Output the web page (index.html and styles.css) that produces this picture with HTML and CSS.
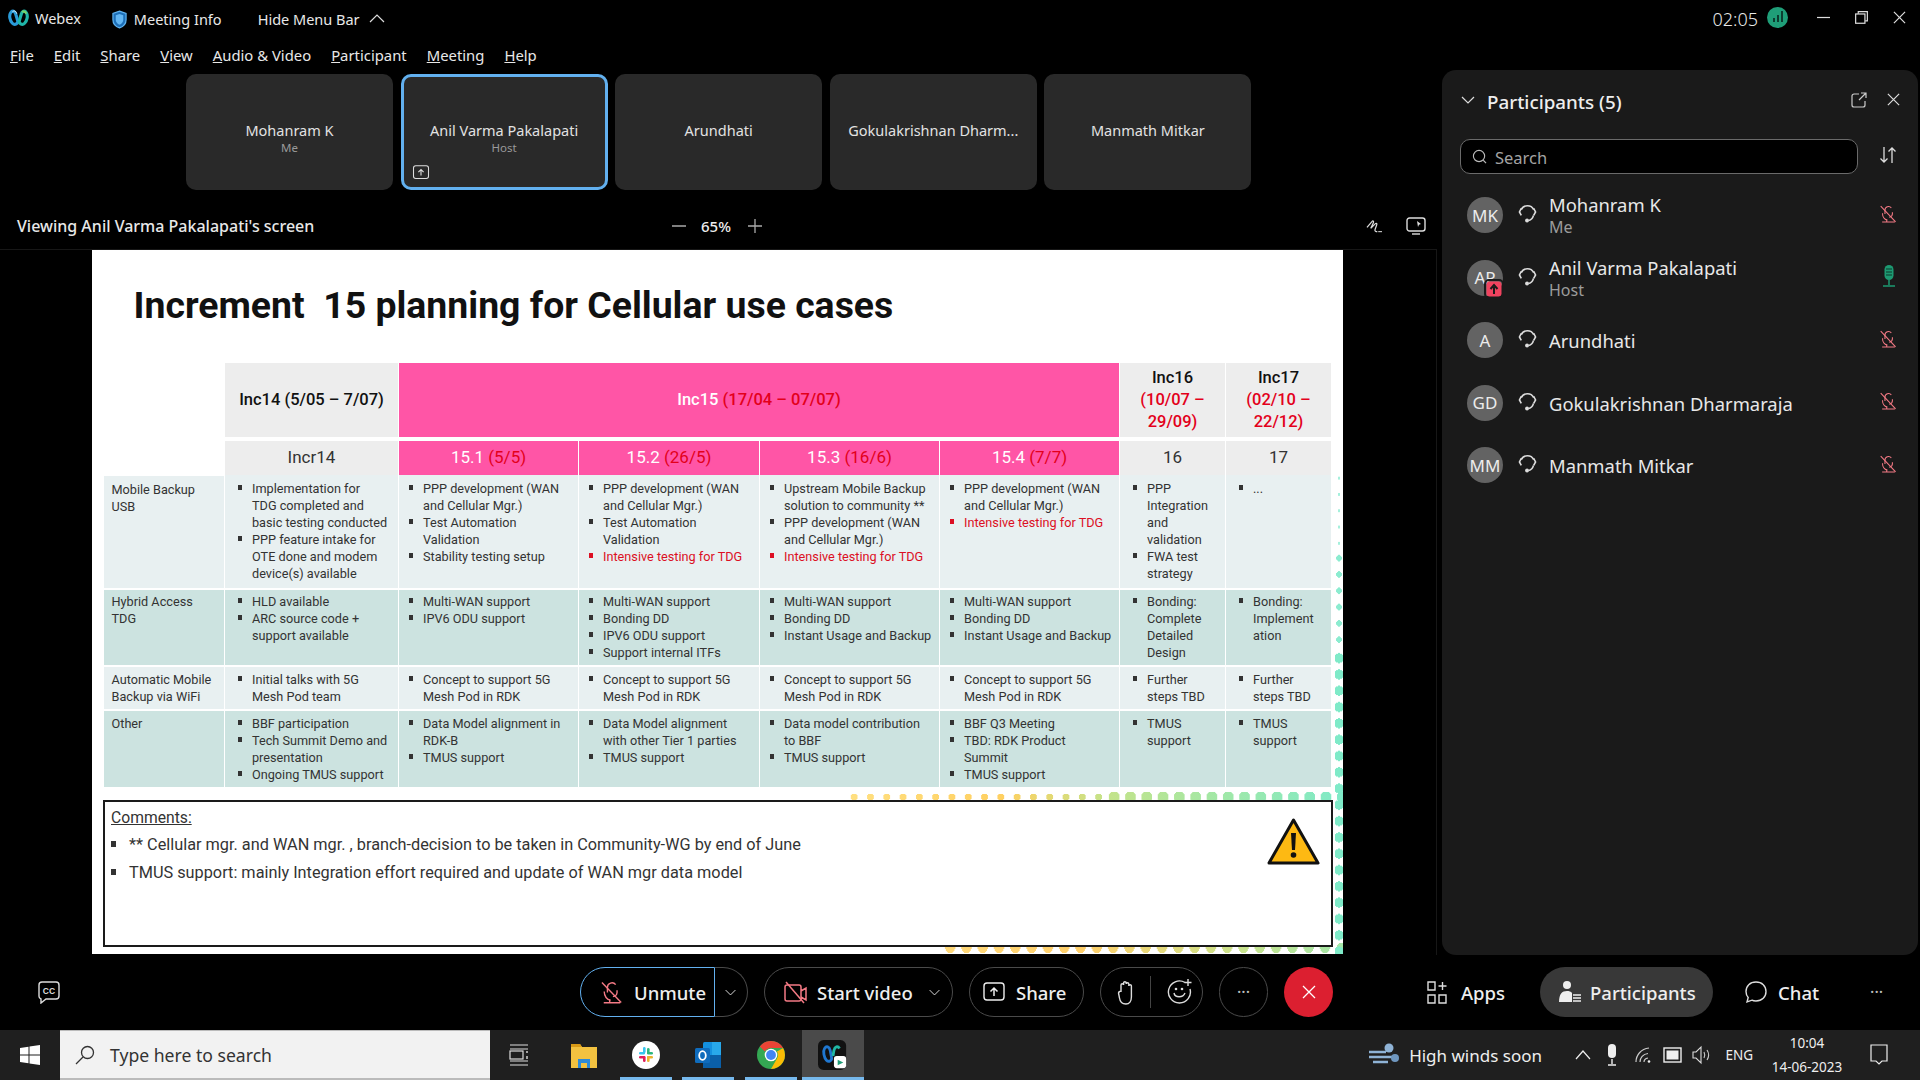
FILE: index.html
```html
<!DOCTYPE html>
<html lang="en">
<head>
<meta charset="utf-8">
<title>Webex</title>
<link rel="stylesheet" href="styles.css">
</head>
<body>
<svg class="sprite" aria-hidden="true">
  <symbol id="mute" viewBox="0 0 24 24"><g fill="none" stroke="currentColor" stroke-width="1.500"><path d="M7 12V6.500a5 5 0 0 1 9-3M17.500 9.500v2.500a5 5 0 0 1-4.500 4.500"/><path d="M3.500 11c0 5 3 9 7 9.500M9.500 20v3.200M3 23.200h18"/><path d="M1 1l21 22"/></g></symbol>
  <symbol id="head" viewBox="0 0 20 20"><g fill="none" stroke="currentColor" stroke-width="1.400"><path d="M4.600 7.500a6 6 0 0 1 10.800 0"/><path d="M4.600 6.500L3 9.500l1.600 3M15.400 6.500L17 9.500l-1.600 3"/><path d="M15.200 12.500c-.6 2.400-2.200 4-4.200 4.500"/></g><circle cx="9.600" cy="17" r="1.700" fill="currentColor"/></symbol>
  <symbol id="chev" viewBox="0 0 16 16"><path d="M2 5l6 6 6-6" fill="none" stroke="currentColor" stroke-width="1.200"/></symbol>
  <symbol id="x" viewBox="0 0 16 16"><path d="M2 2l12 12M14 2L2 14" fill="none" stroke="currentColor" stroke-width="1.300"/></symbol>
  <symbol id="share" viewBox="0 0 22 20"><rect x="1" y="1" width="20" height="17" rx="3" fill="none" stroke="currentColor" stroke-width="1.400"/><path d="M11 14V6M7.500 9.500L11 6l3.500 3.500" fill="none" stroke="currentColor" stroke-width="1.500"/></symbol>
</svg>

<div class="app">
  <header class="titlebar">
    <svg class="logo" viewBox="0 0 24 20"><path d="M3 4c2-3 5-2 6 2l2 7c1 3 -3 6 -6 3C2 13 1 7 3 4z" fill="none" stroke="#2a9bd8" stroke-width="3.600"/><path d="M21 4c-2-3-5-2-6 2l-2 7c-1 3 3 6 6 3 3-3 4-9 2-12z" fill="none" stroke="#1fb5a8" stroke-width="3.600"/><path d="M5 3c2-2 4-1 5 2" fill="none" stroke="#fff" stroke-width="1"/><path d="M16 3c2-1 4 0 5 2" fill="none" stroke="#7ad36a" stroke-width="2.400"/></svg>
    <span class="tb-webex">Webex</span>
    <svg class="shield" viewBox="0 0 16 20"><path d="M8 1l7 2.600v6.600c0 4.400-3 7.400-7 8.800-4-1.400-7-4.400-7-8.800V3.600z" fill="#1d6fb8" stroke="#5fb3f0" stroke-width="1.300"/><path d="M8 4l4 1.500v4.700c0 2.600-1.700 4.400-4 5.300-2.300-.9-4-2.700-4-5.300V5.500z" fill="#62b6f3"/></svg>
    <span class="tb-info">Meeting Info</span>
    <span class="tb-hide">Hide Menu Bar</span>
    <svg class="tb-caret" viewBox="0 0 16 16"><path d="M1 12l7-7 7 7" fill="none" stroke="#ddd" stroke-width="1.200"/></svg>
    <span class="tb-time">02:05</span>
    <svg class="signal" viewBox="0 0 21 21"><circle cx="10.500" cy="10.500" r="10.500" fill="#1f9e78"/><path d="M6 11h2v4H6zM10 8h2v7h-2z" fill="#0c3d30"/><path d="M14 4h2v11h-2z" fill="#0c3d30"/></svg>
    <svg class="win win-min" viewBox="0 0 14 14"><path d="M0 7h14" stroke="#ddd" stroke-width="1.300"/></svg>
    <svg class="win win-res" viewBox="0 0 14 14"><path d="M3.500 3V.7h9.800v10H11" fill="none" stroke="#ddd" stroke-width="1.300"/><rect x=".7" y="3.200" width="10" height="10" fill="none" stroke="#ddd" stroke-width="1.300"/></svg>
    <svg class="win win-close" viewBox="0 0 14 14"><path d="M1 1l12 12M13 1L1 13" stroke="#ddd" stroke-width="1.300"/></svg>
  </header>

  <div class="content">
    <main class="left">
      <nav class="menubar">
        <span class="m-file"><u>F</u>ile</span><span><u>E</u>dit</span><span><u>S</u>hare</span><span><u>V</u>iew</span><span><u>A</u>udio &amp; Video</span><span><u>P</u>articipant</span><span><u>M</u>eeting</span><span><u>H</u>elp</span>
      </nav>
      <section class="tiles">
        <div class="tile"><div class="t-name">Mohanram K</div><div class="t-sub">Me</div></div>
        <div class="tile tile-active"><div class="t-name">Anil Varma Pakalapati</div><div class="t-sub">Host</div>
          <svg class="t-share"><use href="#share"/></svg></div>
        <div class="tile"><div class="t-name">Arundhati</div></div>
        <div class="tile"><div class="t-name">Gokulakrishnan Dharm...</div></div>
        <div class="tile"><div class="t-name">Manmath Mitkar</div></div>
      </section>
      <div class="viewbar">
        <span class="v-title">Viewing Anil Varma Pakalapati's screen</span>
        <div class="zoomctl">
          <svg viewBox="0 0 14 14"><path d="M0 7h14" stroke="#aaa" stroke-width="1.500"/></svg>
          <span>65%</span>
          <svg viewBox="0 0 14 14"><path d="M0 7h14M7 0v14" stroke="#aaa" stroke-width="1.300"/></svg>
        </div>
        <div class="v-tools">
          <svg viewBox="0 0 18 16"><path d="M1 9l5.500-6.500c1-1 2 0 1.300 1.500L5 10l5-5c1-1 2 0 1.300 1.500l-1.800 5c-.3 1.500 1 2 2.500 2" fill="none" stroke="#ddd" stroke-width="1.300"/><path d="M13 13.500h4" stroke="#ddd" stroke-width="1.100"/></svg>
          <svg viewBox="0 0 20 18"><rect x="1" y="1" width="18" height="13" rx="2.500" fill="none" stroke="#ddd" stroke-width="1.400"/><path d="M6 17h8" stroke="#ddd" stroke-width="1.400"/><path d="M11 4l4 3-2 .8L12 10z" fill="#ddd"/></svg>
        </div>
      </div>
      <div class="stage">
        <article class="slide">
          <div class="dots dots-top"></div>
          <div class="dots dots-top2"></div>
          <div class="dots dots-bottom"></div>
          <div class="dots dots-r1"></div>
          <div class="dots dots-r2"></div>
          <div class="dots dots-r3"></div>
          <h1 class="s-title">Increment  15 planning for Cellular use cases</h1>
          <table class="plan">
            <colgroup><col class="c0"><col class="c1"><col class="c2"><col class="c3"><col class="c4"><col class="c5"><col class="c6"><col class="c7"></colgroup>
            <tr class="r-h1">
              <th class="blank"></th>
              <th class="gray">Inc14 (5/05 – 7/07)</th>
              <th class="pink" colspan="4">Inc15 <em>(17/04 – 07/07)</em></th>
              <th class="gray">Inc16<br><em>(10/07 –<br>29/09)</em></th>
              <th class="gray">Inc17<br><em>(02/10 –<br>22/12)</em></th>
            </tr>
            <tr class="r-h2">
              <th class="blank"></th>
              <td class="gray">Incr14</td>
              <td class="pink">15.1 <em>(5/5)</em></td>
              <td class="pink">15.2 <em>(26/5)</em></td>
              <td class="pink">15.3 <em>(16/6)</em></td>
              <td class="pink">15.4 <em>(7/7)</em></td>
              <td class="gray">16</td>
              <td class="gray">17</td>
            </tr>
            <tr class="light r1">
              <td>Mobile Backup<br>USB</td>
              <td class="wide"><ul><li>Implementation for<br>TDG completed and<br>basic testing conducted</li><li>PPP feature intake for<br>OTE done and modem<br>device(s) available</li></ul></td>
              <td><ul><li>PPP development (WAN<br>and Cellular Mgr.)</li><li>Test Automation<br>Validation</li><li>Stability testing setup</li></ul></td>
              <td><ul><li>PPP development (WAN<br>and Cellular Mgr.)</li><li>Test Automation<br>Validation</li><li class="red">Intensive testing for TDG</li></ul></td>
              <td><ul><li>Upstream Mobile Backup<br>solution to community **</li><li>PPP development (WAN<br>and Cellular Mgr.)</li><li class="red">Intensive testing for TDG</li></ul></td>
              <td><ul><li>PPP development (WAN<br>and Cellular Mgr.)</li><li class="red">Intensive testing for TDG</li></ul></td>
              <td class="wide"><ul><li>PPP<br>Integration<br>and<br>validation</li><li>FWA test<br>strategy</li></ul></td>
              <td class="wide"><ul><li>...</li></ul></td>
            </tr>
            <tr class="dark r2">
              <td>Hybrid Access<br>TDG</td>
              <td class="wide"><ul><li>HLD available</li><li>ARC source code +<br>support available</li></ul></td>
              <td><ul><li>Multi-WAN support</li><li>IPV6 ODU support</li></ul></td>
              <td><ul><li>Multi-WAN support</li><li>Bonding DD</li><li>IPV6 ODU support</li><li>Support internal ITFs</li></ul></td>
              <td><ul><li>Multi-WAN support</li><li>Bonding DD</li><li>Instant Usage and Backup</li></ul></td>
              <td><ul><li>Multi-WAN support</li><li>Bonding DD</li><li>Instant Usage and Backup</li></ul></td>
              <td class="wide"><ul><li>Bonding:<br>Complete<br>Detailed<br>Design</li></ul></td>
              <td class="wide"><ul><li>Bonding:<br>Implement<br>ation</li></ul></td>
            </tr>
            <tr class="light r3">
              <td>Automatic Mobile<br>Backup via WiFi</td>
              <td class="wide"><ul><li>Initial talks with 5G<br>Mesh Pod team</li></ul></td>
              <td><ul><li>Concept to support 5G<br>Mesh Pod in RDK</li></ul></td>
              <td><ul><li>Concept to support 5G<br>Mesh Pod in RDK</li></ul></td>
              <td><ul><li>Concept to support 5G<br>Mesh Pod in RDK</li></ul></td>
              <td><ul><li>Concept to support 5G<br>Mesh Pod in RDK</li></ul></td>
              <td class="wide"><ul><li>Further<br>steps TBD</li></ul></td>
              <td class="wide"><ul><li>Further<br>steps TBD</li></ul></td>
            </tr>
            <tr class="dark r4">
              <td>Other</td>
              <td class="wide"><ul><li>BBF participation</li><li>Tech Summit Demo and<br>presentation</li><li>Ongoing TMUS support</li></ul></td>
              <td><ul><li>Data Model alignment in<br>RDK-B</li><li>TMUS support</li></ul></td>
              <td><ul><li>Data Model alignment<br>with other Tier 1 parties</li><li>TMUS support</li></ul></td>
              <td><ul><li>Data model contribution<br>to BBF</li><li>TMUS support</li></ul></td>
              <td><ul><li>BBF Q3 Meeting</li><li>TBD: RDK Product<br>Summit</li><li>TMUS support</li></ul></td>
              <td class="wide"><ul><li>TMUS<br>support</li></ul></td>
              <td class="wide"><ul><li>TMUS<br>support</li></ul></td>
            </tr>
          </table>
          <section class="comments">
            <div>
              <div class="c-head">Comments:</div>
              <ul>
                <li>** Cellular mgr. and WAN mgr. , branch-decision to be taken in Community-WG by end of June</li>
                <li>TMUS support: mainly Integration effort required and update of WAN mgr data model</li>
              </ul>
            </div>
            <svg class="warn" viewBox="0 0 53 47"><path d="M26.500 2L51 45H2z" fill="#fdb913" stroke="#111" stroke-width="3" stroke-linejoin="round"/><path d="M24 15h5l-1 17h-3z" fill="#111"/><circle cx="26.500" cy="37" r="2.800" fill="#111"/></svg>
          </section>
        </article>
      </div>
    </main>

    <aside class="panel">
      <div class="p-head">
        <svg class="p-chev"><use href="#chev"/></svg>
        <h2>Participants (5)</h2>
        <svg class="p-pop" viewBox="0 0 16 16"><path d="M8 2H3a2 2 0 0 0-2 2v9a2 2 0 0 0 2 2h9a2 2 0 0 0 2-2V9" fill="none" stroke="#ccc" stroke-width="1.200"/><path d="M8 8l7-7M10 1h5v5" fill="none" stroke="#ccc" stroke-width="1.200"/></svg>
        <svg class="p-x"><use href="#x"/></svg>
      </div>
      <div class="p-search">
        <div class="searchbox">
          <svg viewBox="0 0 16 16"><circle cx="7.500" cy="7.500" r="6" fill="none" stroke="#bbb" stroke-width="1.200"/><path d="M12 12l3 3" stroke="#bbb" stroke-width="1.200"/></svg>
          <span>Search</span>
        </div>
        <svg class="p-sort" viewBox="0 0 18 20"><path d="M5 2v15M1.500 13.500L5 17l3.500-3.500M13 18V3M9.500 6.500L13 3l3.500 3.500" fill="none" stroke="#ddd" stroke-width="1.300"/></svg>
      </div>
      <ul class="plist">
        <li class="person"><span class="avatar">MK</span><svg class="hs"><use href="#head"/></svg><div class="p-names"><div class="p-name">Mohanram K</div><div class="p-role">Me</div></div><svg class="pmic"><use href="#mute"/></svg></li>
        <li class="person"><span class="avatar">AP<svg class="badge" viewBox="0 0 16 16"><rect x=".5" y=".5" width="15" height="15" rx="3" fill="#f0435f"/><path d="M8 13V6M4.500 8L8 4l3.500 4" fill="none" stroke="#1a1a1a" stroke-width="2"/></svg></span><svg class="hs"><use href="#head"/></svg><div class="p-names"><div class="p-name">Anil Varma Pakalapati</div><div class="p-role">Host</div></div>
          <svg class="mic-on" viewBox="0 0 24 24"><rect x="7.500" y="1" width="9" height="15" rx="4.500" fill="#1d9a72"/><path d="M9 5h6M9 8h6M9 11h6" stroke="#0d3a2c" stroke-width="1"/><path d="M12 16v5M6 22h12" stroke="#1d9a72" stroke-width="1.500"/></svg></li>
        <li class="person solo"><span class="avatar">A</span><svg class="hs"><use href="#head"/></svg><div class="p-names"><div class="p-name">Arundhati</div></div><svg class="pmic"><use href="#mute"/></svg></li>
        <li class="person solo"><span class="avatar">GD</span><svg class="hs"><use href="#head"/></svg><div class="p-names"><div class="p-name">Gokulakrishnan Dharmaraja</div></div><svg class="pmic"><use href="#mute"/></svg></li>
        <li class="person solo"><span class="avatar">MM</span><svg class="hs"><use href="#head"/></svg><div class="p-names"><div class="p-name">Manmath Mitkar</div></div><svg class="pmic"><use href="#mute"/></svg></li>
      </ul>
    </aside>
  </div>

  <footer class="toolbar">
    <svg class="cc" viewBox="0 0 24 24"><path d="M5 2h14a3 3 0 0 1 3 3v11a3 3 0 0 1-3 3H9l-5 4v-4a3 3 0 0 1-2-3V5a3 3 0 0 1 3-3z" fill="none" stroke="#ddd" stroke-width="1.400"/><text x="12" y="14" class="cc-t">CC</text></svg>
    <div class="tb-center">
      <div class="group g-unmute">
        <button class="btn-focus"><svg class="ico-mute"><use href="#mute"/></svg>Unmute</button>
        <button class="btn-chev"><svg class="chev"><use href="#chev"/></svg></button>
      </div>
      <button class="pill g-video"><svg class="ico-cam" viewBox="0 0 26 26"><path d="M5 6h12a2 2 0 0 1 2 2v12a2 2 0 0 1-2 2H5a2 2 0 0 1-2-2V8a2 2 0 0 1 2-2zM19 12l5-3v12l-5-3" fill="none" stroke="#f47a85" stroke-width="1.500"/><path d="M4 3l18 21" stroke="#f47a85" stroke-width="1.500"/></svg>Start video<svg class="chev"><use href="#chev"/></svg></button>
      <button class="pill g-share"><svg class="ico-share"><use href="#share"/></svg>Share</button>
      <div class="pill g-react">
        <svg class="ico-hand" viewBox="0 0 20 26"><path d="M5 13V6a1.300 1.300 0 0 1 2.600 0V4a1.300 1.300 0 0 1 2.600 0v1a1.300 1.300 0 0 1 2.600 0v2a1.300 1.300 0 0 1 2.600 0v11c0 4-2 7-5.500 7S4 23 3.500 19L2.500 14c0-2 2.500-2 2.500-1z" fill="none" stroke="#ddd" stroke-width="1.400"/></svg>
        <span class="sep"></span>
        <svg class="ico-emo" viewBox="0 0 26 26"><path d="M18 3.500A11 11 0 1 0 23 10" fill="none" stroke="#ddd" stroke-width="1.400"/><path d="M7 14c1 5 9 5 11 0" fill="none" stroke="#ddd" stroke-width="1.400"/><circle cx="9" cy="10" r="1.300" fill="#ddd"/><circle cx="15" cy="10" r="1.300" fill="#ddd"/><path d="M21 0v7M17.500 3.500h7" stroke="#ddd" stroke-width="1.400"/></svg>
      </div>
      <button class="pill g-more"><span class="dotsmenu">···</span></button>
      <button class="g-end"><svg class="ico-x"><use href="#x"/></svg></button>
    </div>
    <div class="tb-right">
      <button class="flat b-apps"><svg class="ico-apps" viewBox="0 0 22 24"><path d="M2 2h7v8H2zM2 15h7v8H2zM13 15h7v8h-7zM16.500 2v8M12.500 6h8" fill="none" stroke="#ddd" stroke-width="1.400"/></svg>Apps</button>
      <button class="flat b-part"><svg class="ico-part" viewBox="0 0 24 24"><circle cx="9" cy="5" r="4" fill="#eee"/><path d="M1 22c0-8 3-11 8-11 2 0 4 .5 5 2v9z" fill="#eee"/><path d="M15 15h8M15 18h8M15 21h8" stroke="#eee" stroke-width="1.500"/></svg>Participants</button>
      <button class="flat b-chat"><svg class="ico-chat" viewBox="0 0 24 24"><path d="M12 2c6 0 10 4 10 9.500S18 21 12 21c-1.500 0-3-.2-4-.8L3 22l1.200-4.500C2.800 16 2 14 2 11.500 2 6 6 2 12 2z" fill="none" stroke="#ddd" stroke-width="1.400"/></svg>Chat</button>
      <span class="dotsmenu r-more">···</span>
    </div>
  </footer>

  <div class="taskbar">
    <svg class="tk-win" viewBox="0 0 20 20"><path d="M0 3l8.500-1.200v7.700H0zM9.500 1.600L20 0v9.500H9.500zM0 10.500h8.500v7.700L0 17zM9.500 10.500H20V20L9.500 18.400z" fill="#fff"/></svg>
    <div class="tk-search">
      <svg viewBox="0 0 20 20"><circle cx="12.500" cy="7.500" r="6" fill="none" stroke="#333" stroke-width="1.300"/><path d="M8 12l-7 7" stroke="#333" stroke-width="1.300"/></svg>
      <span>Type here to search</span>
    </div>
    <div class="tk-apps">
      <div class="tk-app"><svg class="ic20" viewBox="0 0 20 24"><path d="M1 2h18M1 6h18M1 18h18M1 22h18" stroke="#ddd" stroke-width="1.200"/><rect x="1" y="8" width="13" height="8" fill="none" stroke="#ddd" stroke-width="1.200"/><path d="M18 8v2M18 13v3" stroke="#ddd" stroke-width="1.400"/></svg></div>
      <div class="tk-app"><svg class="ic28" viewBox="0 0 28 28"><path d="M1 3h9l2 3h15v21H1z" fill="#f3c240"/><path d="M1 3h9l2 3H1z" fill="#d99a16"/><path d="M8 27v-9h12v9h-3v-5h-6v5z" fill="#2e8ad6"/></svg></div>
      <div class="tk-app run"><svg class="ic28" viewBox="0 0 28 28"><circle cx="14" cy="14" r="14" fill="#fff"/><rect x="7" y="11" width="6" height="2.600" rx="1.300" fill="#36c5f0"/><rect x="11" y="6" width="2.600" height="6" rx="1.300" fill="#36c5f0"/><rect x="15" y="7" width="2.600" height="6" rx="1.300" fill="#2eb67d"/><rect x="15" y="11" width="6" height="2.600" rx="1.300" fill="#2eb67d"/><rect x="15" y="15" width="6" height="2.600" rx="1.300" fill="#ecb22e"/><rect x="15" y="15" width="2.600" height="6" rx="1.300" fill="#ecb22e"/><rect x="7" y="15" width="6" height="2.600" rx="1.300" fill="#e01e5a"/><rect x="11" y="15" width="2.600" height="6" rx="1.300" fill="#e01e5a"/></svg></div>
      <div class="tk-app run"><svg class="ic28" viewBox="0 0 28 28"><rect x="9" y="1" width="18" height="26" rx="1.500" fill="#1490df"/><path d="M9 14h18v13H9z" fill="#0a5fa8"/><path d="M18 1h9v13h-9z" fill="#28a8ea"/><rect x="1" y="7" width="15" height="15" rx="1.500" fill="#0f6cbd"/><ellipse cx="8.500" cy="14.500" rx="3.300" ry="4.300" fill="none" stroke="#fff" stroke-width="1.800"/></svg></div>
      <div class="tk-app run"><svg class="ic28" viewBox="0 0 28 28"><circle cx="14" cy="14" r="14" fill="#34a853"/><path d="M14 0a14 14 0 0 1 12.100 7H14a7 7 0 0 0-6.100 3.500L2.800 5.600A14 14 0 0 1 14 0z" fill="#ea4335"/><path d="M26.100 7A14 14 0 0 1 14 28l6-10.500A7 7 0 0 0 20 10.500z" fill="#fbbc05"/><circle cx="14" cy="14" r="6.300" fill="#fff"/><circle cx="14" cy="14" r="4.900" fill="#4285f4"/></svg></div>
      <div class="tk-app active"><svg class="ic32" viewBox="0 0 32 32"><rect width="30" height="32" rx="6" fill="#111"/><path d="M7 9c2-3 5-2 6 2l1.500 8c.5 3-3 5-5.500 2.500S5 12 7 9z" fill="none" stroke="#1f77d0" stroke-width="3"/><path d="M23 9c-2-3-5-2-6 2l-1 6" fill="none" stroke="#20b8a5" stroke-width="3"/><rect x="17" y="17" width="13" height="13" rx="3" fill="#fff"/><path d="M21 21l6 3-6 3z" fill="#1f9e78"/></svg></div>
    </div>
    <div class="tk-tray">
      <svg class="t-wind" viewBox="0 0 30 24"><path d="M0 9h17M0 14h24M4 19h15" stroke="#8fb3d6" stroke-width="2.400"/><circle cx="20" cy="5" r="4.500" fill="#8fb3d6"/><circle cx="26" cy="15" r="4" fill="#6f97bf"/></svg>
      <span class="t-wtext">High winds soon</span>
      <svg class="t-caret" viewBox="0 0 16 10"><path d="M1 9l7-8 7 8" fill="none" stroke="#eee" stroke-width="1.200"/></svg>
      <svg class="t-mic" viewBox="0 0 12 22"><rect x="2" y="0" width="8" height="14" rx="4" fill="#eee"/><path d="M6 15v5M2 21h8" stroke="#eee" stroke-width="1.400"/></svg>
      <svg class="t-wifi" viewBox="0 0 18 18"><path d="M1 16C1 9 6 3 14 2M5 16c0-4 3-8 8-8.500M9 16c0-2 1-3.500 4-4" fill="none" stroke="#ccc" stroke-width="1.200"/><circle cx="14" cy="15.500" r="1.300" fill="#eee"/></svg>
      <svg class="t-batt" viewBox="0 0 20 16"><rect x="1" y="1" width="17" height="14" fill="none" stroke="#eee" stroke-width="1.400"/><rect x="3.500" y="3.500" width="12" height="9" fill="#eee"/></svg>
      <svg class="t-vol" viewBox="0 0 20 20"><path d="M1 7h3l5-5v16l-5-5H1z" fill="none" stroke="#ddd" stroke-width="1.100"/><path d="M12 7c1 2 1 4 0 6M15 5c2 3 2 7 0 10" fill="none" stroke="#ccc" stroke-width="1.100"/></svg>
      <span class="t-lang">ENG</span>
      <div class="t-clock"><div>10:04</div><div>14-06-2023</div></div>
      <svg class="t-note" viewBox="0 0 18 22"><path d="M1 1h16v16h-5l-3 3-3-3H1z" fill="none" stroke="#eee" stroke-width="1.200"/></svg>
    </div>
  </div>
</div>
</body>
</html>
```

FILE: styles.css
```css
*{box-sizing:border-box}
html,body{margin:0;padding:0;background:#000}
body{font-family:"Noto Sans","Open Sans",sans-serif;color:#e8e8e8}
.sprite{display:none}
svg{display:block;flex:none}
button{font:inherit;color:inherit;background:none;border:0;padding:0}
ul{list-style:none;margin:0;padding:0}

.app{width:1920px;height:1080px;display:flex;flex-direction:column;overflow:hidden;background:#000}

/* title bar */
.titlebar{height:38px;display:flex;align-items:center;font-size:14.500px;flex:none}
.logo{width:21px;height:18px;margin-left:8px;margin-top:-3px}
.tb-webex{margin-left:6px;margin-top:-2px}
.shield{width:15px;height:19px;margin-left:31px}
.tb-info{margin-left:7px;margin-top:-1px}
.tb-hide{margin-left:36px;margin-top:-1px}
.tb-caret{width:16px;height:16px;margin-left:9px;margin-top:-3px}
.tb-time{margin-left:auto;font-size:18px;font-weight:300;position:relative;left:1px}
.signal{width:21px;height:21px;margin-left:10px;margin-top:-3px}
.win{width:13px;height:13px;margin-top:-3px}
.win-min{margin-left:29px}
.win-res{margin-left:25px}
.win-close{margin-left:25px;margin-right:14px}

/* content */
.content{display:flex;height:917px;flex:none}
.left{width:1442px;flex:none;display:flex;flex-direction:column}
.menubar{height:36px;display:flex;align-items:center;gap:20px;padding:0 0 2px 10px;font-size:14.850px;flex:none}
.tiles{height:116px;display:flex;gap:7.600px;padding-left:186px;flex:none}
.tile{width:207px;border-radius:10px;background:#292929;display:flex;flex-direction:column;align-items:center;position:relative;font-size:14.500px;color:#e2e2e2;padding-top:46px}
.t-name{line-height:20px}
.t-sub{font-size:11.500px;line-height:16px;color:#9a9a9a}
.tile-active{border:3px solid #62b0ef;padding-top:43px}
.t-share{position:absolute;left:8px;bottom:7px;width:18px;height:15px;color:#ddd}
.viewbar{height:59px;display:flex;align-items:center;padding:13px 0 0 17px;position:relative;flex:none;font-size:16px;font-weight:500}
.v-title{color:#e8e8e8;width:655px}
.zoomctl{display:flex;align-items:center;font-size:15px;color:#eee}
.zoomctl svg{width:14px;height:14px}
.zoomctl span{margin:0 17px 0 15px}
.v-tools{margin-left:auto;display:flex;align-items:center;gap:23px;padding-right:16px}
.v-tools svg:first-child{width:17px;height:15px}
.v-tools svg:last-child{width:20px;height:18px}
.stage{flex:1;width:1437px;border:1px solid #171717;border-left:0;border-bottom:0;padding-left:92px}

/* slide */
.slide{width:1251px;height:704px;background:#fff;position:relative;color:#333;font-family:Roboto,"Liberation Sans",sans-serif;overflow:hidden;padding-left:12px}
.s-title{margin:0 0 0 29.500px;height:113px;padding-bottom:3px;display:flex;align-items:center;white-space:pre;font-size:37.400px;font-weight:700;color:#111}
.plan{width:1228px;margin-left:-1px;table-layout:fixed;border-collapse:collapse;font-size:12.700px;line-height:17.100px;white-space:nowrap}
.c0{width:121px}.c1{width:174px}.c2{width:180px}.c3{width:181px}.c4{width:180px}.c5{width:180px}.c6{width:106px}.c7{width:106px}
.plan td,.plan th{padding:0;border:1px solid #fff;border-width:0 1px 2px 1px;vertical-align:top}
.r-h1 th{vertical-align:middle;text-align:center;font-size:16.500px;line-height:22px;font-weight:500;color:#111;border-bottom-width:4px}
.r-h1{height:76px}
.r-h2{height:36px}
.r-h2 td{vertical-align:middle;text-align:center;font-size:17px;color:#333;border-bottom-width:0}
.blank{background:#fff}
.gray{background:#ededed}
.pink{background:#ff55a6;color:#fff!important}
.plan em{font-style:normal;color:#e3001b}
.r1{height:114px}.r2{height:77px}.r3{height:44px}.r4{height:78px}
.light td{background:#e8f0f1;padding-top:5px}
.dark td{background:#cce3e0;padding-top:3px}
.plan .r3 td{padding-top:4px}
.plan .r4 td{padding-top:4px}
.plan td:first-child{padding-left:7.500px}
.plan ul{padding-left:10px}
.plan .wide ul{padding-left:13px}
.plan li{padding-left:14px;text-indent:-14px}
.plan li::before,.comments li::before{content:"";display:inline-block;width:4px;height:5px;background:currentColor;margin-right:10px;vertical-align:3px}
.red{color:#dc0f23}

.comments{position:relative;z-index:1;margin-top:11px;width:1230px;height:147px;margin-left:-1px;border:2px solid #1a1a1a;background:#fff;display:flex;justify-content:space-between;padding:6px 11px 0 6px;font-size:16.300px;color:#333}
.c-head{text-decoration:underline;font-size:15.700px;line-height:20px;margin-bottom:3px}
.comments li{line-height:27.500px;padding-left:18px;text-indent:-18px}
.comments li::before{width:5px;height:6px;margin-right:13px}
.warn{width:53px;height:47px;margin-top:10px}

.dots{position:absolute;-webkit-mask-repeat:repeat;mask-repeat:repeat}
.dots-top{left:754px;width:260px;top:542px;height:10px;background:linear-gradient(90deg,#ffe082,#ffd061 60%,#c4e38a);-webkit-mask-image:radial-gradient(circle 3.500px,#000 98%,transparent);mask-image:radial-gradient(circle 3.500px,#000 98%,transparent);-webkit-mask-size:16.300px 10px;mask-size:16.300px 10px}
.dots-top2{left:1014px;right:0;top:540px;height:14px;background:linear-gradient(90deg,#c4e38a,#a0e8a8 50%,#7feac8);-webkit-mask-image:radial-gradient(circle 5.500px,#000 98%,transparent);mask-image:radial-gradient(circle 5.500px,#000 98%,transparent);-webkit-mask-size:16.300px 14px;mask-size:16.300px 14px}
.dots-bottom{left:850px;right:0;top:692px;height:12px;background:linear-gradient(90deg,#ffd97a,#ffcf6a 35%,#c9e48e 75%,#a4e6a8);-webkit-mask-image:radial-gradient(circle 5px,#000 98%,transparent);mask-image:radial-gradient(circle 5px,#000 98%,transparent);-webkit-mask-size:16.300px 12px;mask-size:16.300px 12px}
.dots-r1{right:0;top:220px;height:80px;width:8px;background:#a5f0dc;-webkit-mask-image:radial-gradient(circle 1.500px at 4px 50%,#000 98%,transparent);mask-image:radial-gradient(circle 1.500px at 4px 50%,#000 98%,transparent);-webkit-mask-size:8px 16.300px;mask-size:8px 16.300px}
.dots-r2{right:0;top:300px;height:100px;width:8px;background:#8cecd0;-webkit-mask-image:radial-gradient(circle 3px at 4px 50%,#000 98%,transparent);mask-image:radial-gradient(circle 3px at 4px 50%,#000 98%,transparent);-webkit-mask-size:8px 16.300px;mask-size:8px 16.300px}
.dots-r3{right:0;top:400px;bottom:0;width:8px;background:#7feac8;-webkit-mask-image:radial-gradient(circle 5px at 4px 50%,#000 98%,transparent);mask-image:radial-gradient(circle 5px at 4px 50%,#000 98%,transparent);-webkit-mask-size:8px 16.300px;mask-size:8px 16.300px}

/* panel */
.panel{width:476px;height:885px;margin-top:32px;background:#1a1a1a;border-radius:14px;flex:none}
.p-head{height:69px;display:flex;align-items:center;padding:0 0 6px 18px}
.p-chev{width:16px;height:16px;color:#ddd;margin-top:-3px}
.p-head h2{margin:0 0 0 11px;font-size:18.800px;font-weight:500;color:#eee}
.p-pop{width:16px;height:16px;margin-left:auto;margin-top:-4px;position:relative;left:1px}
.p-x{width:15px;height:15px;color:#ddd;margin:-4px 17px 0 20px}
.p-search{display:flex;align-items:center;padding-left:18px}
.searchbox{width:398px;height:35px;border:1.500px solid #6a6a6a;border-radius:10px;background:#000;display:flex;align-items:center;padding-left:11px;color:#a3a3a3;font-size:16.500px}
.searchbox svg{width:15px;height:15px;margin-right:8px}
.searchbox span{position:relative;top:1px}
.p-sort{width:18px;height:20px;margin-left:21px;margin-top:-3px}
.plist{margin-top:10px}
.person{height:62.500px;display:flex;align-items:center;padding-left:25px;color:#e8e8e8}
.avatar{width:36px;height:36px;border-radius:50%;background:#636363;display:flex;align-items:center;justify-content:center;font-size:17px;color:#ececec;position:relative;flex:none}
.badge{position:absolute;right:1px;bottom:-1px;width:16px;height:16px;outline:2px solid #1a1a1a;border-radius:3px}
.hs{width:23px;height:23px;margin-left:13px;margin-top:-5px;color:#ddd}
.p-names{margin-left:10px;flex:1}
.p-name{font-size:18.400px;line-height:24px;color:#e8e8e8}
.solo .p-names{padding-top:2px}
.p-role{font-size:16px;line-height:20px;color:#9c9c9c}
.pmic{width:17px;height:18px;margin-right:21.500px;margin-top:-3px;color:#f47a85}
.mic-on{width:24px;height:24px;margin-right:17px;margin-top:-3px}

/* toolbar */
.toolbar{height:75px;display:flex;align-items:center;position:relative;flex:none;font-size:18.500px;font-weight:500;color:#eee;padding-bottom:1px}
.cc{width:24px;height:24px;margin-left:37px}
.cc-t{font:700 8.500px Arial,"Liberation Sans",sans-serif;fill:#ddd;text-anchor:middle}
.tb-center{position:absolute;left:580px;top:12px;display:flex;align-items:center;gap:16px}
.group{display:flex;height:50px}
.g-unmute{width:168px}
.btn-focus{width:135px;border:1px solid #62b0ef;border-radius:25px 0 0 25px;display:flex;align-items:center;padding-left:20px;gap:11px}
.btn-chev{flex:1;border:1px solid #4a4a4a;border-left:0;border-radius:0 25px 25px 0;display:flex;align-items:center;padding-left:9px}
.ico-mute{width:22px;height:23px;color:#f47a85}
.chev{width:13px;height:13px;color:#ddd}
.pill{height:50px;border:1px solid #4a4a4a;border-radius:25px;display:flex;align-items:center}
.g-video{width:189px;padding-left:17px}
.ico-cam{width:26px;height:26px;margin-right:9px}
.g-video .chev{margin-left:15px}
.g-share{width:115px;padding-left:13px}
.ico-share{width:22px;height:20px;margin-right:11px;color:#eee}
.g-react{width:103px;padding-left:15px}
.ico-hand{width:20px;height:26px}
.sep{width:1px;height:32px;background:#444;margin:0 16px 0 14px}
.ico-emo{width:26px;height:26px}
.g-more{width:49px;justify-content:center}
.dotsmenu{font-size:16px;color:#bbb}
.g-end{width:49px;height:50px;border-radius:50%;background:#dc1f30;display:flex;align-items:center;justify-content:center}
.ico-x{width:16px;height:18px;color:#fff}
.tb-right{position:absolute;left:1427px;top:12px;height:50px;display:flex;align-items:center}
.flat{height:50px;display:flex;align-items:center;border-radius:25px}
.b-apps{margin:0 35px 0 -1px}
.ico-apps{width:22px;height:24px;margin-right:13px}
.b-part{width:173px;background:#383838;padding-left:18px}
.ico-part{width:24px;height:24px;margin-right:8px}
.b-chat{margin-left:31px}
.ico-chat{width:24px;height:24px;margin-right:10px}
.r-more{margin-left:51px}

/* taskbar */
.taskbar{height:50px;display:flex;align-items:center;background:#1f1f1f;flex:none}
.tk-win{width:20px;height:20px;margin-left:20px}
.tk-search{width:430px;height:50px;margin-left:20px;background:#f2f2f2;border-top:1px solid #bbb;border-bottom:2px solid #bbb;display:flex;align-items:center;padding-left:15px;color:#333;font-size:17.600px;gap:15px}
.tk-search svg{width:20px;height:20px}
.tk-apps{display:flex;height:50px}
.tk-app{width:62.400px;height:50px;display:flex;align-items:center;justify-content:center}
.tk-app:first-child svg{position:relative;left:-2px}
.run{background:linear-gradient(#76b9ed,#76b9ed) center bottom/52px 3px no-repeat}
.active{background:#4a4a4a;box-shadow:inset 0 -3px 0 #76b9ed}
.ic20{width:20px;height:24px}
.ic28{width:28px;height:28px}
.ic32{width:30px;height:32px}
.tk-tray{margin-left:auto;display:flex;align-items:center;color:#eee;height:50px}
.t-wind{width:30px;height:24px}
.t-wtext{font-size:17px;margin-left:10px;width:165.700px}
.t-caret{width:16px;height:10px}
.t-mic{width:12px;height:22px;margin-left:15px}
.t-wifi{width:18px;height:18px;margin-left:17.200px}
.t-batt{width:20px;height:16px;margin-left:9.800px}
.t-vol{width:20px;height:20px;margin-left:9px}
.t-lang{font-size:13.500px;margin-left:13.600px}
.t-clock{font-size:13.500px;line-height:24px;text-align:center;width:76px;margin-left:16px}
.t-note{width:18px;height:22px;margin-left:25px;margin-right:32px}
```
